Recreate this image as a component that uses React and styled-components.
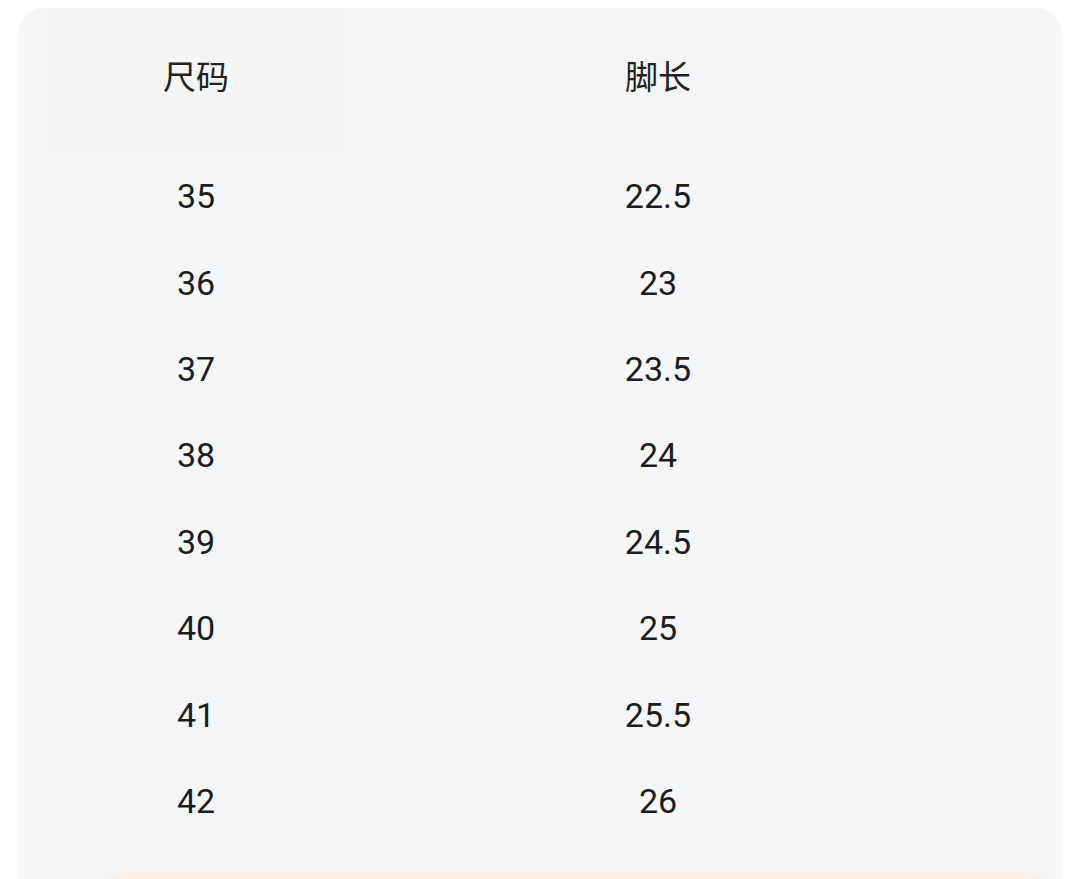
import React from 'react'
import styled, { createGlobalStyle } from 'styled-components'

const GlobalStyle = createGlobalStyle`
  html, body {
    margin: 0;
    padding: 0;
    background: #ffffff;
    overflow: hidden;
  }
  body {
    font-family: Roboto, 'Noto Sans CJK SC', sans-serif;
  }
`

const rows = [
  ['35', '22.5'],
  ['36', '23'],
  ['37', '23.5'],
  ['38', '24'],
  ['39', '24.5'],
  ['40', '25'],
  ['41', '25.5'],
  ['42', '26'],
]

const App = () => (
  <Page>
    <GlobalStyle />
    <Card>
      <Table>
        <HeaderRow>
          <HeadCell highlight>尺码</HeadCell>
          <HeadCell>脚长</HeadCell>
        </HeaderRow>
        <Body>
          {rows.map(([size, length]) => (
            <Row key={size}>
              <Cell>{size}</Cell>
              <Cell>{length}</Cell>
            </Row>
          ))}
        </Body>
      </Table>
      <Notice />
    </Card>
  </Page>
)

export default App

const Page = styled.div`
  width: 1080px;
  height: 879px;
  padding: 8px 18px 0;
  box-sizing: border-box;
`

const Card = styled.div`
  background: #f5f6f8;
  border-radius: 26px;
  height: 1000px;
`

const Table = styled.div`
  display: flex;
  flex-direction: column;
  padding: 0 34px;
`

const HeaderRow = styled.div`
  display: grid;
  grid-template-columns: 288px 636px;
  height: 139px;
`

const HeadCell = styled.div`
  display: flex;
  align-items: center;
  justify-content: center;
  font-family: 'Noto Sans CJK SC', sans-serif;
  font-size: 33px;
  color: #222222;
  background: ${p => (p.highlight ? '#f5f5f5' : 'transparent')};
  padding-bottom: 6px;
`

const Body = styled.div`
  display: flex;
  flex-direction: column;
  padding-top: 6px;
`

const Row = styled.div`
  display: grid;
  grid-template-columns: 288px 636px;
  height: 86.4px;
`

const Cell = styled.div`
  display: flex;
  align-items: center;
  justify-content: center;
  font-family: Roboto, sans-serif;
  font-size: 34px;
  color: #1c1c1c;
`

const Notice = styled.div`
  margin: 29px 12px 0 85px;
  height: 80px;
  border-radius: 22px;
  background: #fdeee6;
`
